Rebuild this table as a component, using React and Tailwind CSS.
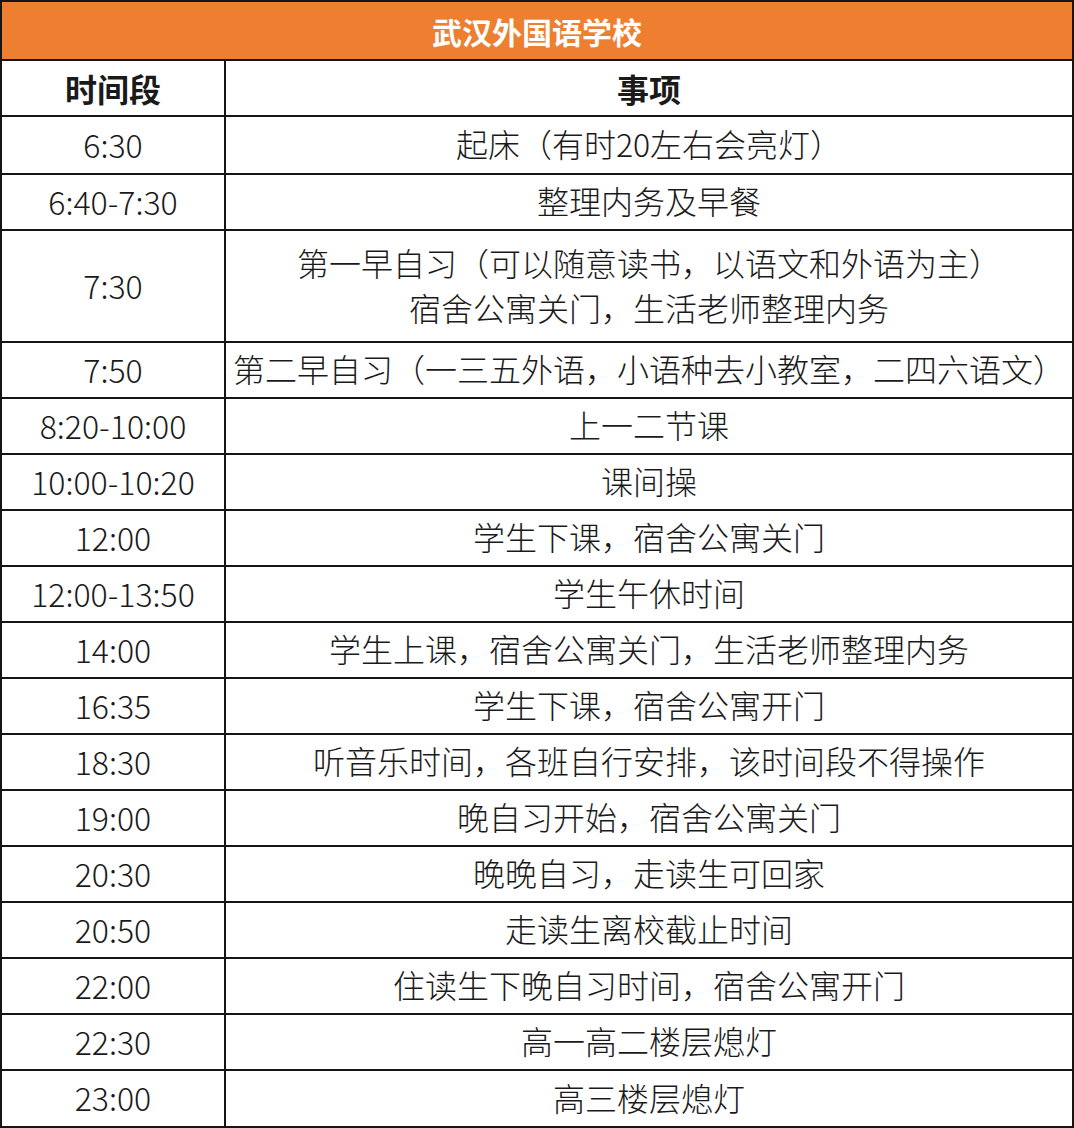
import React from "react";

const rows = [
  { t: "6:30", e: ["起床（有时20左右会亮灯）"], h: "h-[58px]" },
  { t: "6:40-7:30", e: ["整理内务及早餐"], h: "h-[56px]" },
  { t: "7:30", e: ["第一早自习（可以随意读书，以语文和外语为主）", "宿舍公寓关门，生活老师整理内务"], h: "h-[112px]" },
  { t: "7:50", e: ["第二早自习（一三五外语，小语种去小教室，二四六语文）"], h: "h-[56px]" },
  { t: "8:20-10:00", e: ["上一二节课"], h: "h-[56px]" },
  { t: "10:00-10:20", e: ["课间操"], h: "h-[56px]" },
  { t: "12:00", e: ["学生下课，宿舍公寓关门"], h: "h-[56px]" },
  { t: "12:00-13:50", e: ["学生午休时间"], h: "h-[56px]" },
  { t: "14:00", e: ["学生上课，宿舍公寓关门，生活老师整理内务"], h: "h-[56px]" },
  { t: "16:35", e: ["学生下课，宿舍公寓开门"], h: "h-[56px]" },
  { t: "18:30", e: ["听音乐时间，各班自行安排，该时间段不得操作"], h: "h-[56px]" },
  { t: "19:00", e: ["晚自习开始，宿舍公寓关门"], h: "h-[56px]" },
  { t: "20:30", e: ["晚晚自习，走读生可回家"], h: "h-[56px]" },
  { t: "20:50", e: ["走读生离校截止时间"], h: "h-[56px]" },
  { t: "22:00", e: ["住读生下晚自习时间，宿舍公寓开门"], h: "h-[56px]" },
  { t: "22:30", e: ["高一高二楼层熄灯"], h: "h-[56px]" },
  { t: "23:00", e: ["高三楼层熄灯"], h: "h-[57px]" },
];

export default function App() {
  return (
    <div
      className="w-[1074px] h-[1128px] bg-white border-2 border-[#151515] flex flex-col text-[#1a1a1a]"
      style={{ fontFamily: '"Noto Sans CJK SC", "Noto Sans", sans-serif' }}
    >
      <div className="h-[57px] shrink-0 bg-[#ee7e30] flex items-center justify-center text-white font-bold text-[30px] leading-none">
        武汉外国语学校
      </div>
      <div className="h-[56px] shrink-0 border-t-2 border-[#151515] flex">
        <div className="w-[224px] shrink-0 border-r-2 border-[#151515] flex items-center justify-center font-bold text-[32px] leading-none">
          时间段
        </div>
        <div className="flex-1 flex items-center justify-center font-bold text-[32px] leading-none">
          事项
        </div>
      </div>
      {rows.map((r, i) => (
        <div key={i} className={`${r.h} shrink-0 border-t-2 border-[#151515] flex`}>
          <div className="w-[224px] shrink-0 border-r-2 border-[#151515] flex items-center justify-center pb-[3px] text-[32px] font-light leading-none">
            {r.t}
          </div>
          <div className="flex-1 flex flex-col items-center justify-center pb-[3px] text-[32px] font-light leading-[45px] whitespace-nowrap">
            {r.e.map((line, j) => (
              <div key={j}>{line}</div>
            ))}
          </div>
        </div>
      ))}
    </div>
  );
}
